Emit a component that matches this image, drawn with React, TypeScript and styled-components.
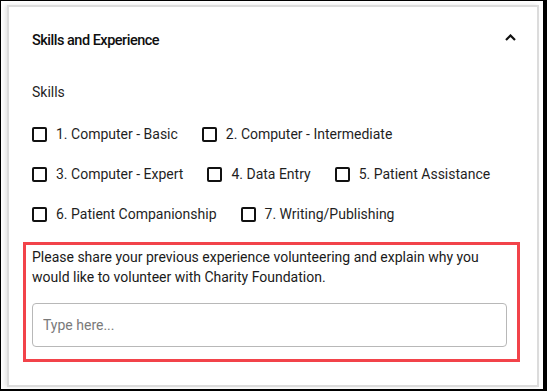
import styled, { createGlobalStyle } from 'styled-components'

const GlobalStyle = createGlobalStyle`
  html, body {
    margin: 0;
    padding: 0;
    background: #fff;
  }
  body {
    font-family: Roboto, 'Liberation Sans', sans-serif;
    color: #1f1f1f;
  }
  * {
    box-sizing: border-box;
  }
`

const Frame = styled.div`
  width: 547px;
  height: 391px;
  border-style: solid;
  border-color: #000;
  border-width: 1px 4px 2px 1px;
  padding: 4px 4px 2px 6px;
  background: #fff;
`

const Card = styled.div`
  height: 100%;
  border: 2px solid #dcdcdc;
  box-shadow: -2px 0 4px rgba(0, 0, 0, 0.1);
  background: #fff;
  display: flex;
  flex-direction: column;
  overflow: hidden;
`

const Header = styled.div`
  flex-shrink: 0;
  height: 66px;
  padding: 0 21px 0 23px;
  display: flex;
  align-items: center;
  justify-content: space-between;
`

const Title = styled.h2`
  margin: 0;
  font-size: 14.5px;
  font-weight: 500;
  letter-spacing: -0.5px;
  color: #0f0f0f;
`

const Chevron = styled.svg`
  width: 11px;
  height: 7px;
  margin-bottom: 6px;
`

const Body = styled.div`
  padding: 0 17px 23px 14px;
`

const SkillsBlock = styled.div`
  padding: 0 9px;
`

const SkillsLabel = styled.div`
  margin-top: 9px;
  font-size: 14px;
  line-height: 20px;
  margin-bottom: 12px;
`

const Options = styled.div`
  display: flex;
  flex-wrap: wrap;
  column-gap: 24px;
`

const Option = styled.label`
  height: 40px;
  display: flex;
  align-items: center;
  font-size: 14px;
  cursor: pointer;
`

const Box = styled.span`
  width: 15px;
  height: 15px;
  border: 2px solid #111;
  border-radius: 2px;
  margin-right: 9px;
  flex-shrink: 0;
`

const QuestionBox = styled.div`
  margin-top: 8px;
  border: 3px solid #f2434a;
  padding: 2px 10px 12px 6px;
`

const Question = styled.p`
  margin: 0;
  font-size: 14px;
  line-height: 20px;
  color: #1a1a1a;
`

const Input = styled.input`
  display: block;
  width: 100%;
  height: 44px;
  margin-top: 16px;
  border: 1px solid #b8b8b8;
  border-radius: 4px;
  padding: 0 10px;
  font-family: Roboto, 'Liberation Sans', sans-serif;
  font-size: 14px;
  outline: none;
  &::placeholder {
    color: #7a7a7a;
  }
`

const skills = [
  '1. Computer - Basic',
  '2. Computer - Intermediate',
  '3. Computer - Expert',
  '4. Data Entry',
  '5. Patient Assistance',
  '6. Patient Companionship',
  '7. Writing/Publishing',
]

export default function App() {
  return (
    <>
      <GlobalStyle />
      <Frame>
        <Card>
          <Header>
            <Title>Skills and Experience</Title>
            <Chevron viewBox="0 0 11 7">
              <polyline points="1,6 5.5,1.5 10,6" fill="none" stroke="#111" strokeWidth="2.2" />
            </Chevron>
          </Header>
          <Body>
            <SkillsBlock>
              <SkillsLabel>Skills</SkillsLabel>
              <Options>
                {skills.map((s) => (
                  <Option key={s}>
                    <Box />
                    {s}
                  </Option>
                ))}
              </Options>
            </SkillsBlock>
            <QuestionBox>
              <Question>
                Please share your previous experience volunteering and explain why you would like to volunteer with
                Charity Foundation.
              </Question>
              <Input placeholder="Type here..." />
            </QuestionBox>
          </Body>
        </Card>
      </Frame>
    </>
  )
}
